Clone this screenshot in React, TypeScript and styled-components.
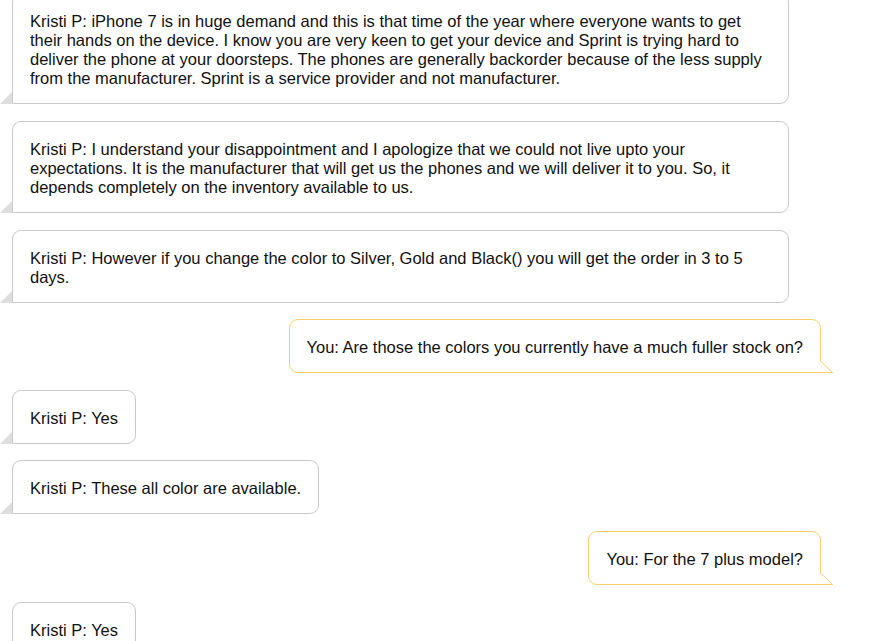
import React from 'react';
import styled, { createGlobalStyle, css } from 'styled-components';

const GlobalStyle = createGlobalStyle`
  html, body {
    margin: 0;
    padding: 0;
    background: #ffffff;
    overflow: hidden;
  }
  body {
    font-family: "Liberation Sans", Arial, Helvetica, sans-serif;
    color: #111111;
  }
`;

const Transcript = styled.div`
  display: flex;
  flex-direction: column;
  gap: 16.6px;
  margin-top: -6.6px;
  padding: 0 66px 0 12px;
`;

const Bubble = styled.div<{ $mine?: boolean }>`
  position: relative;
  box-sizing: border-box;
  max-width: 777px;
  padding: 18px 17px 15px;
  font-size: 16.5px;
  line-height: 19px;
  background: #ffffff;
  border: 1px solid #c9c9c9;
  border-radius: 9px 9px 9px 0;
  align-self: flex-start;

  &::before {
    content: '';
    position: absolute;
    left: -13px;
    bottom: -1px;
    width: 0;
    height: 0;
    border-left: 12px solid transparent;
    border-bottom: 12px solid #dedede;
  }

  ${(p) =>
    p.$mine &&
    css`
      align-self: flex-end;
      border-color: #f7d06a;
      border-radius: 9px 9px 0 9px;
      &::before {
        display: none;
      }
    `}
`;

const TailSvg = styled.svg`
  position: absolute;
  right: -13px;
  bottom: -1px;
  width: 13px;
  height: 12px;
  overflow: visible;
`;

function MyTail() {
  return (
    <TailSvg viewBox="0 0 13 12">
      <polygon points="0,0 0,12 13,12" fill="#ffffff" />
      <path d="M0.5 0 L12.5 11.5 M0 11.5 L13 11.5" stroke="#f7d06a" strokeWidth="1" fill="none" />
    </TailSvg>
  );
}

type Msg = { from: 'agent' | 'me'; text: string };

const messages: Msg[] = [
  {
    from: 'agent',
    text: 'Kristi P: iPhone 7 is in huge demand and this is that time of the year where everyone wants to get their hands on the device. I know you are very keen to get your device and Sprint is trying hard to deliver the phone at your doorsteps. The phones are generally backorder because of the less supply from the manufacturer. Sprint is a service provider and not manufacturer.',
  },
  {
    from: 'agent',
    text: 'Kristi P: I understand your disappointment and I apologize that we could not live upto your expectations. It is the manufacturer that will get us the phones and we will deliver it to you. So, it depends completely on the inventory available to us.',
  },
  {
    from: 'agent',
    text: 'Kristi P: However if you change the color to Silver, Gold and Black() you will get the order in 3 to 5 days.',
  },
  { from: 'me', text: 'You: Are those the colors you currently have a much fuller stock on?' },
  { from: 'agent', text: 'Kristi P: Yes' },
  { from: 'agent', text: 'Kristi P: These all color are available.' },
  { from: 'me', text: 'You: For the 7 plus model?' },
  { from: 'agent', text: 'Kristi P: Yes' },
];

export default function App() {
  return (
    <>
      <GlobalStyle />
      <Transcript>
        {messages.map((m, i) => (
          <Bubble key={i} $mine={m.from === 'me'}>
            {m.text}
            {m.from === 'me' && <MyTail />}
          </Bubble>
        ))}
      </Transcript>
    </>
  );
}
